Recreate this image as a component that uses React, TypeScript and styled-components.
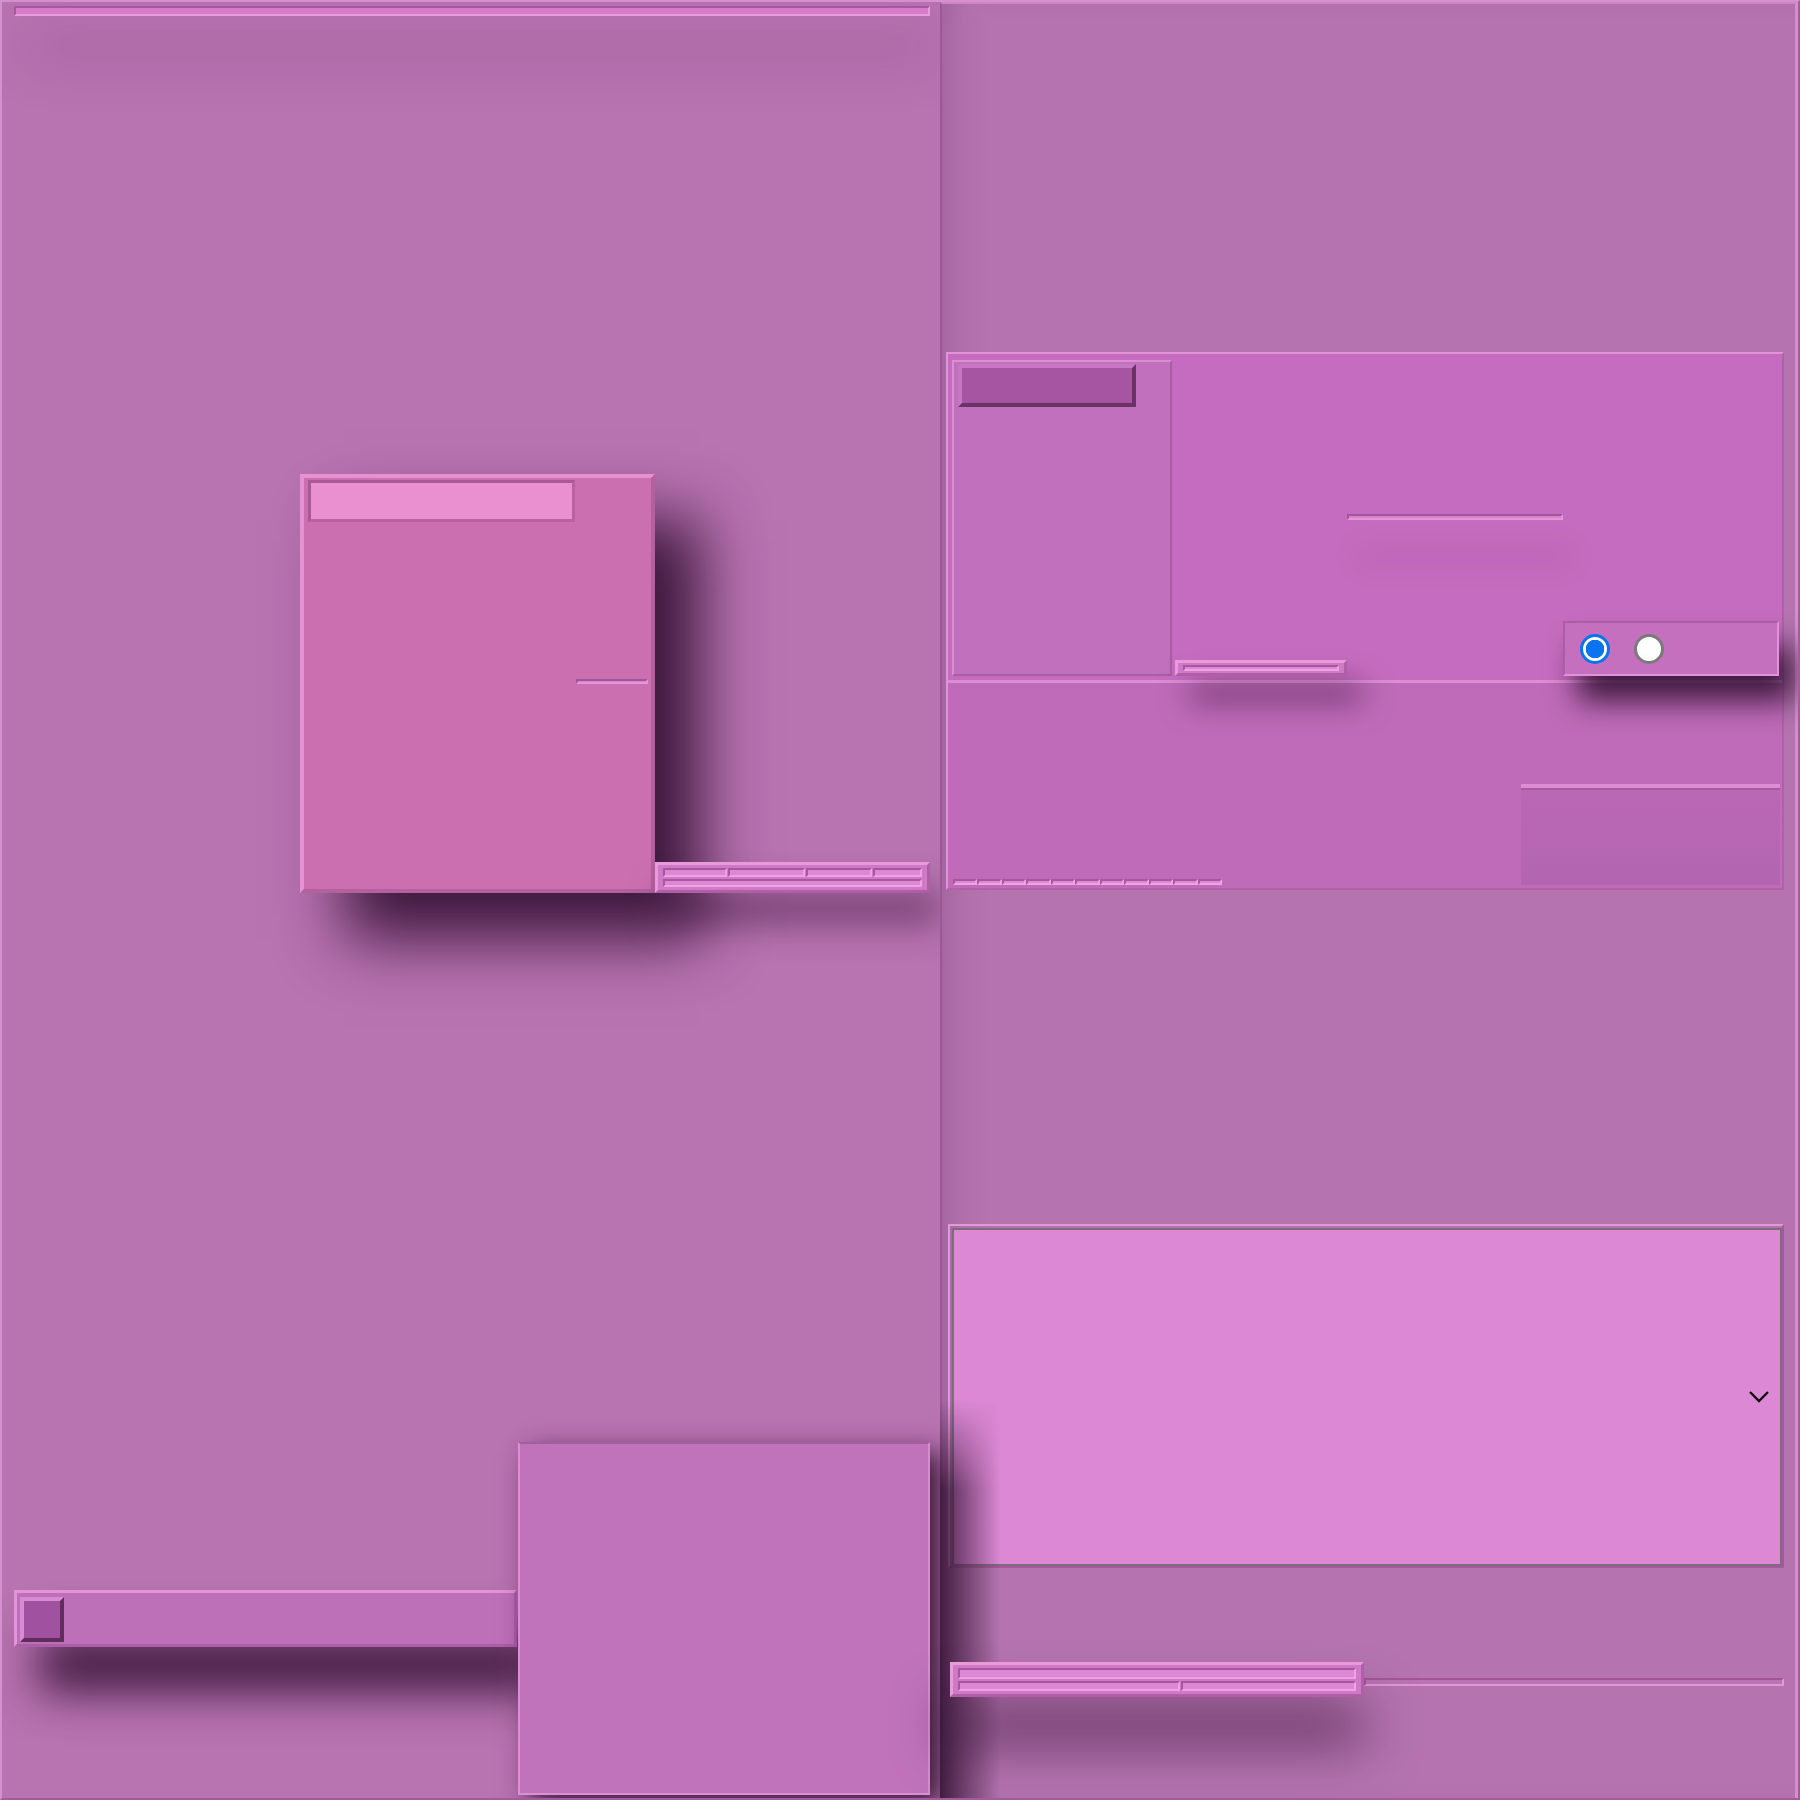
import React from "react";
import styled, { createGlobalStyle, css } from "styled-components";

const LIGHT = "#e595da";
const DARK = "#a3559a";

const raised = (w: number, light = LIGHT, dark = DARK) => css`
    border: ${w}px solid;
    border-color: ${light} ${dark} ${dark} ${light};
`;

const sunken = (w: number, light = LIGHT, dark = DARK) => css`
    border: ${w}px solid;
    border-color: ${dark} ${light} ${light} ${dark};
`;

const GlobalStyle = createGlobalStyle`
    html, body {
        margin: 0;
        padding: 0;
    }
    body {
        font-family: "Liberation Sans", Arial, sans-serif;
        background: #b672b0;
    }
    * {
        box-sizing: border-box;
    }
`;

const Page = styled.div`
    width: 1800px;
    height: 1800px;
    display: grid;
    grid-template-columns: 938px 858px;
    border: 2px solid;
    border-color: #d690cf #a05c9c #a05c9c #d690cf;
    background: #b672b0;
    overflow: hidden;
`;

/* ---------- left column ---------- */

const LeftColumn = styled.section`
    display: flex;
    flex-direction: column;
    padding: 4px 0 3px 0;
    background: #b873b1;
    min-height: 0;
`;

const TopBar = styled.div`
    height: 10px;
    margin: 0 10px 0 12px;
    ${sunken(2, "#ec9ddf", "#a8569d")};
    background: #d67dc9;
    box-shadow: 10px 35px 55px rgba(80, 30, 80, 0.42);
`;

const CardRow = styled.div`
    display: flex;
    align-items: flex-end;
    margin-top: 458px;
    padding-left: 298px;
`;

const Card = styled.div`
    width: 355px;
    height: 419px;
    flex: none;
    display: flex;
    align-items: flex-start;
    padding: 2px 0 0 4px;
    ${raised(4, "#e691d2", "#b4609f")};
    background: #cc6fb1;
    box-shadow: 45px 45px 60px rgba(45, 12, 45, 0.9);
`;

const CardHeader = styled.div`
    width: 267px;
    height: 42px;
    flex: none;
    border: 3px solid;
    border-color: #a95898 #b9629f #b9629f #a95898;
    background: #ea8fd0;
`;

const Rule = styled.div<{ $w?: number }>`
    ${(p) => (p.$w ? `width: ${p.$w}px; flex: none;` : "flex: 1;")}
    height: 6px;
    ${sunken(2)};
    background: #d682cc;
`;

const CardRule = styled(Rule)`
    margin: 199px 0 0 1px;
    height: 5px;
`;

const LineBar = styled.div<{ $w: number; $h: number; $pad?: number }>`
    width: ${(p) => p.$w}px;
    height: ${(p) => p.$h}px;
    flex: none;
    display: flex;
    flex-direction: column;
    gap: 2px;
    padding: ${(p) => p.$pad ?? 3}px 5px;
    ${raised(3, "#e89ad9", "#b05ea6")};
    background: #d07ac7;
`;

const LineRow = styled.div`
    flex: 1;
    display: flex;
    gap: 1px;
`;

const Segment = styled.div<{ $grow: number }>`
    flex: ${(p) => p.$grow} 1 0;
    ${sunken(2, "#f0a3e4", "#a8569e")};
    background: #dc88d2;
`;

const SideBar = styled(LineBar)`
    box-shadow: 10px 30px 35px rgba(45, 12, 45, 0.5);
`;

const BottomRow = styled.div`
    margin-top: auto;
    display: flex;
    align-items: flex-end;
    padding-left: 12px;
`;

const Slider = styled.div`
    width: 503px;
    height: 57px;
    flex: none;
    margin-bottom: 148px;
    padding: 4px 3px;
    ${raised(3, "#e294da", "#ad5ea8")};
    background: #bd6fb8;
    box-shadow: 25px 45px 45px rgba(45, 12, 45, 0.85);
`;

const Thumb = styled.div`
    width: 44px;
    height: 45px;
    ${raised(4, "#d88ad2", "#5e2d5a")};
    background: #a052a0;
`;

const Block = styled.div`
    width: 412px;
    height: 353px;
    flex: none;
    margin-left: 1px;
    border: 2px solid;
    border-color: #a45e9f #d98bd2 #dc8fd4 #dc8fd4;
    background: #c073bb;
    box-shadow: 12px 10px 25px rgba(40, 10, 40, 0.85);
`;

/* ---------- right column ---------- */

const RightColumn = styled.section`
    display: flex;
    flex-direction: column;
    padding: 0 0 1px 4px;
    border-left: 2px solid #9a5896;
    border-top: 2px solid #cd86c6;
    border-right: 3px solid;
    border-right-color: #d58fcd;
    background: #b574b0;
    box-shadow: inset 30px 0 40px -30px rgba(90, 40, 90, 0.35);
    min-height: 0;
`;

const Panel = styled.div`
    width: 838px;
    height: 538px;
    flex: none;
    margin-top: 348px;
    display: flex;
    flex-direction: column;
    ${raised(2, "#e093d6", "#b062a8")};
`;

const PanelTop = styled.div`
    height: 329px;
    flex: none;
    display: flex;
    align-items: flex-end;
    padding: 0 0 4px 4px;
    background: #c66cc0;
    border-bottom: 3px solid #dc8dd3;
`;

const SidePanel = styled.div`
    width: 220px;
    flex: none;
    align-self: stretch;
    margin-top: 6px;
    padding: 2px 4px;
    ${raised(2, "#d98fd0", "#a95ea4")};
    background: #c070bc;
`;

const DarkButton = styled.div`
    width: 178px;
    height: 43px;
    ${raised(4, "#c878c2", "#6a3366")};
    background: #a555a1;
`;

const PanelBar = styled(LineBar)`
    margin-left: 3px;
    position: relative;
    box-shadow: 15px 25px 30px rgba(40, 10, 40, 0.6);
`;

const PanelRule = styled(Rule)`
    margin-bottom: 156px;
    position: relative;
    box-shadow: 10px 40px 30px rgba(60, 20, 60, 0.22);
`;

const RadioBox = styled.div`
    width: 216px;
    height: 55px;
    flex: none;
    display: flex;
    align-items: center;
    gap: 24px;
    padding-left: 15px;
    position: relative;
    ${raised(2, "#a85fa4", "#e192d8")};
    background: #c470be;
    box-shadow: 15px 25px 30px rgba(40, 10, 40, 0.85);
`;

const Radio = styled.input.attrs({ type: "radio" })`
    appearance: none;
    width: 30px;
    height: 30px;
    margin: 0;
    border-radius: 50%;
    border: 3px solid #7a7a7a;
    background: #fff;

    &:checked {
        border-color: #0a74f0;
        background: radial-gradient(circle, #0a74f0 0 9px, #fff 9.5px);
    }
`;

const PanelBottom = styled.div`
    flex: 1;
    display: flex;
    justify-content: space-between;
    align-items: flex-end;
    padding: 0 2px 3px 5px;
    background: #bf6bb9;
`;

const Dashes = styled.div`
    width: 269px;
    height: 6px;
    display: flex;
`;

const ShadedBox = styled.div`
    width: 259px;
    height: 101px;
    border-top: 4px solid;
    border-top-color: #dc8dd3;
    background: linear-gradient(to bottom, #bb68b6, #b365b1);
    box-shadow: inset 0 2px 0 #a85a9f;
`;

const SelectWrap = styled.div`
    width: 836px;
    height: 344px;
    flex: none;
    margin: 334px 0 0 2px;
    padding: 2px 0 0 2px;
    ${raised(2, "#e09ad8", "#a8569f")};
    position: relative;
`;

const Select = styled.select`
    appearance: none;
    width: 100%;
    height: 100%;
    margin: 0;
    border: 2px solid #7d6d7b;
    background: #dc88d4;
    font: inherit;
`;

const Chevron = styled.svg`
    position: absolute;
    right: 12px;
    top: 50%;
    margin-top: -6px;
    pointer-events: none;
`;

const Footer = styled.div`
    margin-top: auto;
    position: relative;
    display: flex;
    align-items: flex-end;
    padding: 0 11px 100px 4px;

    &::before {
        content: "";
        position: absolute;
        left: -6px;
        top: -262px;
        bottom: -1px;
        width: 60px;
        background: linear-gradient(
            to right,
            rgba(50, 18, 50, 0.85),
            rgba(50, 18, 50, 0)
        );
        -webkit-mask-image: linear-gradient(to bottom, transparent 0, #000 90px);
        mask-image: linear-gradient(to bottom, transparent 0, #000 90px);
        pointer-events: none;
    }
`;

const FooterBar = styled(LineBar)`
    position: relative;
    box-shadow: 0 45px 55px rgba(45, 12, 45, 0.7);
`;

const TrailRule = styled(Rule)`
    height: 8px;
    margin-bottom: 11px;
    background: #b874b4;
`;

const segmentsTop = [65, 79, 66, 49];
const dashes = Array.from({ length: 11 }, (_, i) => i);

const App = () => {
    return (
        <>
            <GlobalStyle />
            <Page>
                <LeftColumn>
                    <TopBar />
                    <CardRow>
                        <Card>
                            <CardHeader />
                            <CardRule $w={72} />
                        </Card>
                        <SideBar $w={275} $h={31}>
                            <LineRow>
                                {segmentsTop.map((g, i) => (
                                    <Segment key={i} $grow={g} />
                                ))}
                            </LineRow>
                            <LineRow>
                                <Segment $grow={1} />
                            </LineRow>
                        </SideBar>
                    </CardRow>
                    <BottomRow>
                        <Slider>
                            <Thumb />
                        </Slider>
                        <Block />
                    </BottomRow>
                </LeftColumn>

                <RightColumn>
                    <Panel>
                        <PanelTop>
                            <SidePanel>
                                <DarkButton />
                            </SidePanel>
                            <PanelBar $w={172} $h={16} $pad={2}>
                                <LineRow>
                                    <Segment $grow={1} />
                                </LineRow>
                            </PanelBar>
                            <PanelRule $w={216} />
                            <RadioBox>
                                <Radio name="pick" defaultChecked />
                                <Radio name="pick" />
                            </RadioBox>
                        </PanelTop>
                        <PanelBottom>
                            <Dashes>
                                {dashes.map((i) => (
                                    <Segment key={i} $grow={1} />
                                ))}
                            </Dashes>
                            <ShadedBox />
                        </PanelBottom>
                    </Panel>

                    <SelectWrap>
                        <Select defaultValue="">
                            <option value=""></option>
                        </Select>
                        <Chevron width="22" height="13" viewBox="0 0 22 13">
                            <polyline
                                points="2,2 11,11 20,2"
                                fill="none"
                                stroke="#111"
                                strokeWidth="2.4"
                            />
                        </Chevron>
                    </SelectWrap>

                    <Footer>
                        <FooterBar $w={414} $h={35}>
                            <LineRow>
                                <Segment $grow={1} />
                            </LineRow>
                            <LineRow>
                                <Segment $grow={225} />
                                <Segment $grow={177} />
                            </LineRow>
                        </FooterBar>
                        <TrailRule />
                    </Footer>
                </RightColumn>
            </Page>
        </>
    );
};

export default App;
